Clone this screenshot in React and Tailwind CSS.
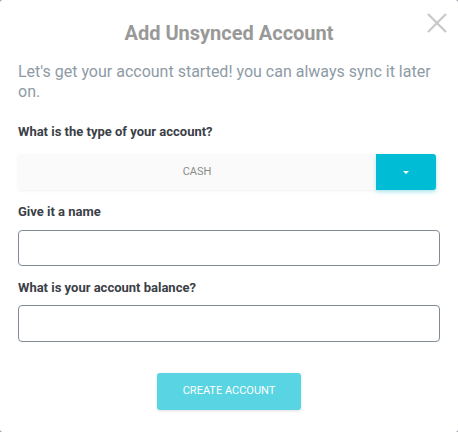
import React from "react";

export default function App() {
  return (
    <div className="w-[458px] h-[432px] bg-gray-400 font-['Roboto',sans-serif]">
      <div className="relative w-full h-full bg-white rounded-[3px] px-[18px] pt-[20px]">
        {/* close */}
        <button className="absolute right-[10px] top-[12px] w-[22px] h-[22px] text-[#c8c8c8]">
          <svg viewBox="0 0 22 22" width="22" height="22" fill="none" stroke="currentColor" strokeWidth="2.2">
            <path d="M2 2 L20 20 M20 2 L2 20" />
          </svg>
        </button>

        <h2 className="text-center text-[20px] leading-[26px] font-bold text-[#999999]">Add Unsynced Account</h2>

        <p className="mt-[16px] text-[16px] leading-[20px] text-[#8e9ba6]">
          Let's get your account started! you can always sync it later on.
        </p>

        <label className="block mt-[22px] text-[13px] leading-[16px] font-bold text-[#3b4046]">
          What is the type of your account?
        </label>
        <div className="mt-[14px] mr-[4px] flex h-[36px] rounded-[3px] shadow-[0_1px_3px_rgba(0,0,0,0.06)]">
          <div className="flex-1 bg-[#fafafa] flex items-center justify-center text-[11px] text-[#8a8a8a] rounded-l-[3px]">
            CASH
          </div>
          <button className="w-[60px] bg-[#00bcd4] rounded-r-[3px] flex items-center justify-center shadow-[0_2px_4px_rgba(0,188,212,0.3)]">
            <svg width="6" height="3" viewBox="0 0 6 3">
              <path d="M0 0 H6 L3 3 Z" fill="white" />
            </svg>
          </button>
        </div>

        <label className="block mt-[14px] text-[13px] leading-[16px] font-bold text-[#3b4046]">
          Give it a name
        </label>
        <input className="mt-[10px] block w-full h-[36px] border border-[#7f8c96] rounded-[4px] outline-none px-2" />

        <label className="block mt-[14px] text-[13px] leading-[16px] font-bold text-[#3b4046]">
          What is your account balance?
        </label>
        <input className="mt-[9px] block w-full h-[37px] border border-[#7f8c96] rounded-[4px] outline-none px-2" />

        <div className="flex justify-center mt-[31px]">
          <button className="w-[144px] h-[37px] bg-[#59d4e2] rounded-[3px] text-white text-[11px] shadow-[0_1px_3px_rgba(0,0,0,0.12)]">
            CREATE ACCOUNT
          </button>
        </div>
      </div>
    </div>
  );
}
